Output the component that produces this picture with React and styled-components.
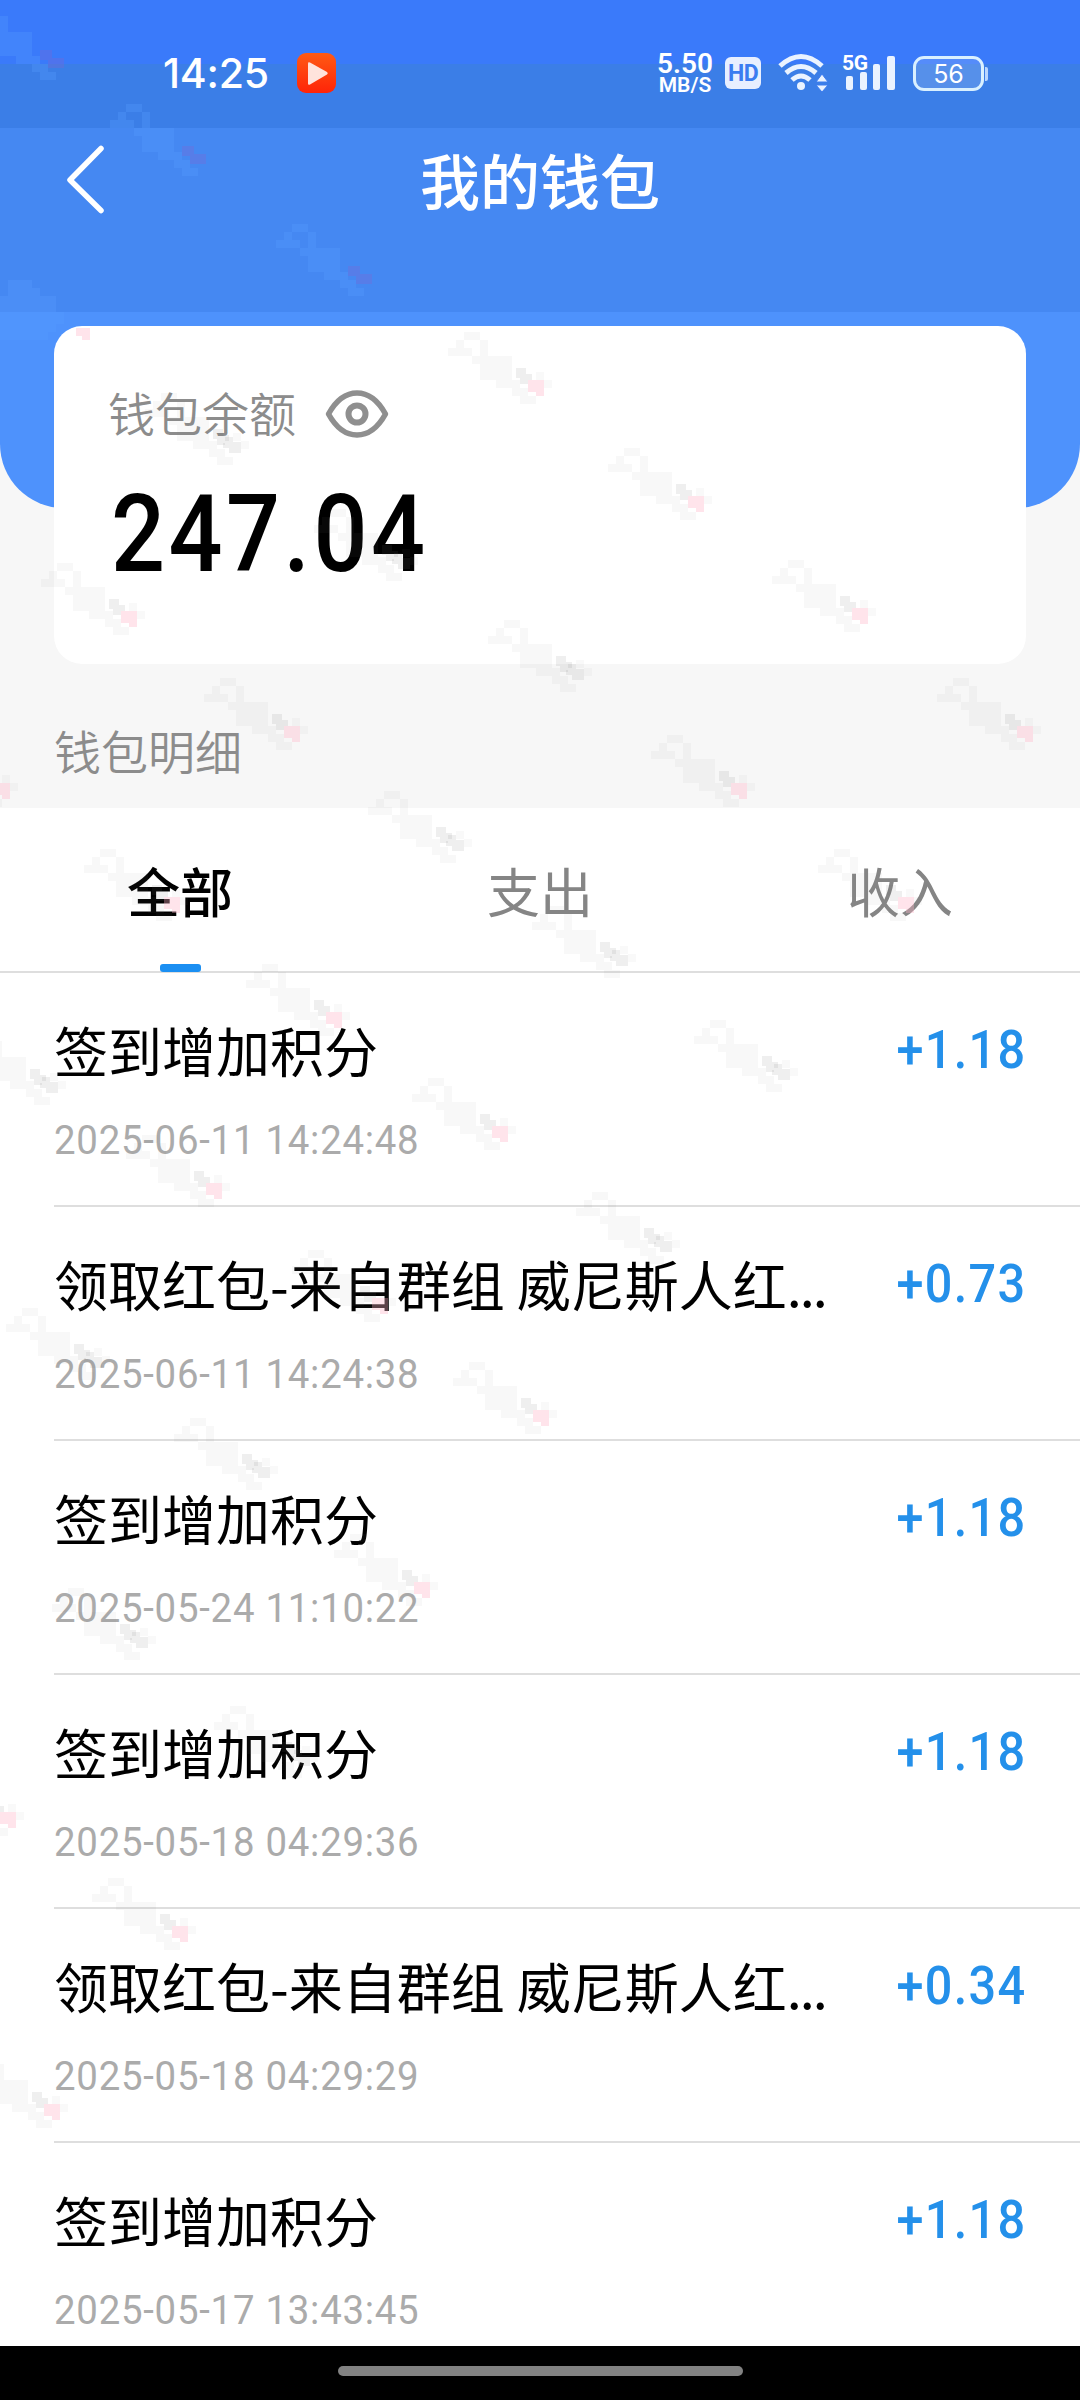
import React from 'react';
import styled, { createGlobalStyle } from 'styled-components';

const GlobalStyle = createGlobalStyle`
  * {
    box-sizing: border-box;
  }

  body {
    margin: 0;
    background: #fff;
    font-family: 'Noto Sans CJK SC', sans-serif;
  }
`;

const Screen = styled.div`
  position: relative;
  display: flex;
  flex-direction: column;
  width: 1080px;
  height: 2400px;
  overflow: hidden;
  background: #f7f7f7;
`;

const Hero = styled.header`
  flex: none;
  height: 508px;
  color: #fff;
  border-radius: 0 0 64px 64px;
  background: linear-gradient(
    #3a7afa 64px,
    #3b7ee7 64px,
    #3b7ee7 128px,
    #4588f2 128px,
    #4588f2 312px,
    #4e92fc 312px
  );
`;

const StatusBar = styled.div`
  display: flex;
  align-items: center;
  height: 128px;
  padding: 18px 91px 0 163px;
`;

const Clock = styled.span`
  width: 134px;
  font: 500 41px/50px Inter, sans-serif;
  letter-spacing: -0.2px;
`;

const StatusIcons = styled.div`
  display: flex;
  align-items: center;
  margin-left: auto;
`;

const Speed = styled.div`
  display: flex;
  flex-direction: column;
  align-items: center;
  width: 56px;
  margin-right: 12px;
  padding-top: 2px;
  font-family: Roboto, sans-serif;
`;

const SpeedValue = styled.span`
  font-size: 28px;
  font-weight: 600;
  line-height: 22px;
`;

const SpeedUnit = styled.span`
  font-size: 21px;
  font-weight: 600;
  line-height: 21px;
`;

const HdBadge = styled.span`
  width: 36px;
  height: 32px;
  border-radius: 6px;
  background: #e8efff;
  color: #3b7cf0;
  font: 700 23px/33px 'Roboto', sans-serif;
  text-align: center;
  letter-spacing: -0.5px;
`;

const Battery = styled.span`
  position: relative;
  width: 71px;
  height: 35px;
  border: 3px solid #d9f0ff;
  border-radius: 11px;
  background: rgba(255, 255, 255, 0.14);
  font: 400 25px/30px Inter, sans-serif;
  text-align: center;
  margin-right: 5px;

  &::after {
    content: '';
    position: absolute;
    right: -7px;
    top: 8px;
    width: 3px;
    height: 14px;
    border-radius: 0 2px 2px 0;
    background: #b9d6ff;
  }
`;

const NavBar = styled.div`
  display: grid;
  grid-template-columns: 140px 1fr 140px;
  align-items: center;
  height: 103px;
`;

const BackButton = styled.button`
  display: flex;
  padding: 0 0 0 64px;
  border: 0;
  background: none;
`;

const Title = styled.h1`
  margin: -2px 0 0;
  font-size: 60px;
  font-weight: 500;
  line-height: 80px;
  text-align: center;
`;

const Card = styled.section`
  flex: none;
  height: 338px;
  margin: -182px 54px 0;
  padding: 55px 54px 0;
  border-radius: 28px;
  background: #fff;
`;

const CardHead = styled.div`
  display: flex;
  align-items: center;
  height: 66px;
`;

const Label = styled.span`
  margin-top: -5px;
  color: #8c8c8c;
  font-size: 47px;
  font-weight: 350;
  line-height: 66px;
`;

const EyeButton = styled.button`
  display: flex;
  margin-left: 29px;
  padding: 0;
  border: 0;
  background: none;
`;

const Balance = styled.div`
  width: max-content;
  margin: 24px 0 0 3px;
  color: #000;
  font: 500 108px/126px Roboto, sans-serif;
  letter-spacing: 4px;
  transform: scaleX(0.88);
  transform-origin: left;
`;

const SectionTitle = styled.h2`
  flex: none;
  height: 144px;
  margin: 0;
  padding: 0 54px;
  color: #8c8c8c;
  font-size: 47px;
  font-weight: 350;
  line-height: 171px;
`;

const Tabs = styled.nav`
  flex: none;
  display: grid;
  grid-template-columns: repeat(3, 1fr);
  height: 165px;
  border-bottom: 2px solid #dedede;
  background: #fff;
`;

const Tab = styled.button`
  display: flex;
  flex-direction: column;
  align-items: center;
  justify-content: space-between;
  padding: 0;
  border: 0;
  background: none;
  color: ${({ $active }) => ($active ? '#000' : '#858585')};
  font-family: inherit;
  font-size: 53px;
  font-weight: ${({ $active }) => ($active ? 500 : 400)};
  line-height: 164px;
  height: 163px;

  &::after {
    content: '';
    flex: none;
    width: 41px;
    height: 8px;
    margin-top: -8px;
    border-radius: 3px;
    background: ${({ $active }) => ($active ? '#1b8ff2' : 'transparent')};
  }
`;

const List = styled.ul`
  flex: 1;
  margin: 0;
  padding: 0 0 0 54px;
  overflow: hidden;
  list-style: none;
  background: #fff;
`;

const Row = styled.li`
  display: flex;
  justify-content: space-between;
  height: 234px;
  padding: 38px 54px 0 0;
  border-bottom: 2px solid #dedede;
`;

const RowTitle = styled.div`
  color: #000;
  font-size: 54px;
  line-height: 78px;
  white-space: nowrap;
`;

const Dots = styled.span`
  letter-spacing: -2px;
`;

const RowDate = styled.div`
  width: max-content;
  margin-top: 23px;
  color: #ababab;
  font: 400 41.5px/56px Roboto, sans-serif;
  letter-spacing: 0.8px;
  transform: scaleX(0.925);
  transform-origin: left;
`;

const Amount = styled.div`
  margin-right: -1px;
  color: #2490ea;
  font: 500 54px/77px Roboto, sans-serif;
  letter-spacing: 1.5px;
  transform: scaleX(0.9);
  transform-origin: right;
`;

const HomeBar = styled.footer`
  flex: none;
  display: flex;
  justify-content: center;
  height: 54px;
  padding-top: 20px;
  background: #000;
`;

const HomePill = styled.div`
  width: 405px;
  height: 10px;
  border-radius: 5px;
  background: #828282;
`;

const MarkLayer = styled.svg`
  position: absolute;
  inset: 0;
  pointer-events: none;
`;

const records = [
  { title: '签到增加积分', date: '2025-06-11 14:24:48', amount: '+1.18' },
  { title: '领取红包-来自群组 威尼斯人红', cut: true, date: '2025-06-11 14:24:38', amount: '+0.73' },
  { title: '签到增加积分', date: '2025-05-24 11:10:22', amount: '+1.18' },
  { title: '签到增加积分', date: '2025-05-18 04:29:36', amount: '+1.18' },
  { title: '领取红包-来自群组 威尼斯人红', cut: true, date: '2025-05-18 04:29:29', amount: '+0.34' },
  { title: '签到增加积分', date: '2025-05-17 13:43:45', amount: '+1.18' },
];

// x, y, tone of the heart
const marks = [
  [145, 393, 'gray'],
  [448, 332, 'pink'],
  [608, 448, 'pink'],
  [772, 560, 'pink'],
  [41, 563, 'pink'],
  [314, 509, 'gray'],
  [488, 620, 'gray'],
  [204, 678, 'pink'],
  [937, 678, 'pink'],
  [651, 735, 'pink'],
  [-86, 735, 'pink'],
  [368, 791, 'gray'],
  [84, 849, 'pink'],
  [818, 849, 'pink'],
  [532, 906, 'gray'],
  [246, 964, 'pink'],
  [694, 1020, 'gray'],
  [-38, 1033, 'gray'],
  [412, 1078, 'pink'],
  [126, 1135, 'pink'],
  [576, 1192, 'gray'],
  [292, 1250, 'pink'],
  [6, 1308, 'gray'],
  [453, 1362, 'pink'],
  [174, 1418, 'gray'],
  [334, 1534, 'pink'],
  [52, 1588, 'gray'],
  [214, 1706, 'gray'],
  [-80, 1764, 'pink'],
  [92, 1878, 'pink'],
  [-36, 2056, 'pink'],
];

const heroMarks = [
  [-32, 8],
  [110, 104],
  [276, 224],
];

// rows of 8px cells: [row, first column, cell count]
const cells = [
  [0, 2, 2],
  [1, 1, 1],
  [1, 4, 1],
  [2, 0, 3],
  [2, 4, 1],
  [3, 3, 5],
  [4, 4, 4],
  [5, 4, 4],
  [6, 6, 3],
  [7, 8, 2],
  [8, 9, 2],
];

const Cells = ({ fill }) =>
  cells.map(([row, col, count]) => (
    <rect key={`${row}-${col}`} x={col * 8} y={row * 8} width={count * 8} height="8" fill={fill} />
  ));

const Mark = ({ x, y, tone }) => (
  <g transform={`translate(${x} ${y})`} shapeRendering="crispEdges">
    <Cells fill="rgba(128,128,128,.06)" />
    <path d="M68 36h10v6h6v6h-4v4h-8v-6h-4z" fill="rgba(110,110,110,.11)" />
    {tone === 'pink' ? (
      <path d="M80 48h16v16h-8v-4h-8z" fill="rgba(255,180,200,.36)" />
    ) : (
      <path d="M80 44h8v5h8v11h-12v-5h-6v-5h2z" fill="rgba(120,120,120,.12)" />
    )}
    <path d="M88 40h8v8h8v8h-8v-8h-8z" fill="rgba(128,128,128,.05)" />
  </g>
);

const Watermarks = () => (
  <MarkLayer width="1080" height="2346" viewBox="0 0 1080 2346">
    {marks.map(([x, y, tone]) => (
      <Mark key={`${x}-${y}`} x={x} y={y} tone={tone} />
    ))}
    {heroMarks.map(([x, y]) => (
      <g key={`${x}-${y}`} transform={`translate(${x} ${y})`} shapeRendering="crispEdges">
        <Cells fill="rgba(86,156,255,.3)" />
        <path d="M72 42h12v8h12v10h-16v-8h-8z" fill="rgba(130,100,210,.3)" />
      </g>
    ))}
    <g shapeRendering="crispEdges">
      <path d="M8 280h24v8h8v8h16v16h8v12h-8v8h-8v8H0v-44h8z" fill="rgba(86,156,255,.35)" />
      <path d="M76 328h14v12h-8v-4h-6z" fill="rgba(255,180,200,.36)" />
    </g>
  </MarkLayer>
);

const PlayIcon = () => (
  <svg width="39" height="40" viewBox="0 0 39 40">
    <defs>
      <linearGradient id="play" x1="0" y1="0" x2="0" y2="1">
        <stop offset="0" stopColor="#ff5a14" />
        <stop offset="1" stopColor="#ff2408" />
      </linearGradient>
    </defs>
    <rect width="39" height="40" rx="9" fill="url(#play)" />
    <path d="M11 10.500v20q0 2 2 1l17-10q1.600-1.200 0-2.400l-17-9.600q-2-1-2 1z" fill="#ffe3dc" />
  </svg>
);

const WifiIcon = () => (
  <svg width="52" height="40" viewBox="0 0 52 40" style={{ marginLeft: 17 }}>
    <g fill="none" stroke="#eaf3ff" strokeWidth="5">
      <path d="M2 13Q23-6 44 13" />
      <path d="M8 20Q23 7 38 20" />
      <path d="M14 27Q23 19 32 27" />
    </g>
    <circle cx="23" cy="33" r="4" fill="#eaf3ff" />
    <path d="M38 29l6-8 6 8zM38 32l6 7 6-7z" fill="#eaf3ff" stroke="#3b7cf0" strokeWidth="1" />
  </svg>
);

const SignalIcon = () => (
  <svg width="54" height="50" viewBox="0 -5 54 50" style={{ margin: '0 17px 0 12px' }}>
    <text x="0" y="17" fill="#fff" fontFamily="Roboto, sans-serif" fontSize="21" fontWeight="700" textLength="26">
      5G
    </text>
    <g fill="#eaf3ff">
      <rect x="4" y="23" width="7" height="14" rx="2" />
      <rect x="18" y="19" width="7" height="18" rx="2" />
      <rect x="31" y="11" width="7" height="26" rx="2" />
      <rect x="45" y="3" width="8" height="34" rx="2" />
    </g>
  </svg>
);

const BackIcon = () => (
  <svg width="42" height="72" viewBox="0 0 42 72" fill="none" stroke="#fff" strokeWidth="5.500" strokeLinecap="round" strokeLinejoin="round">
    <path d="M37 4.500L6 36l31 30.500" />
  </svg>
);

const EyeIcon = () => (
  <svg width="64" height="50" viewBox="0 0 64 50" fill="none" stroke="#8f8f8f">
    <path d="M3.500 25C19-3 45-3 60.500 25C45 53 19 53 3.500 25z" strokeWidth="5.500" strokeLinejoin="round" />
    <circle cx="32" cy="25" r="8.500" strokeWidth="6" />
  </svg>
);

export default function App() {
  return (
    <>
      <GlobalStyle />
      <Screen>
        <Hero>
          <StatusBar>
            <Clock>14:25</Clock>
            <PlayIcon />
            <StatusIcons>
              <Speed>
                <SpeedValue>5.50</SpeedValue>
                <SpeedUnit>MB/S</SpeedUnit>
              </Speed>
              <HdBadge>HD</HdBadge>
              <WifiIcon />
              <SignalIcon />
              <Battery>56</Battery>
            </StatusIcons>
          </StatusBar>
          <NavBar>
            <BackButton>
              <BackIcon />
            </BackButton>
            <Title>我的钱包</Title>
          </NavBar>
        </Hero>
        <Card>
          <CardHead>
            <Label>钱包余额</Label>
            <EyeButton>
              <EyeIcon />
            </EyeButton>
          </CardHead>
          <Balance>247.04</Balance>
        </Card>
        <SectionTitle>钱包明细</SectionTitle>
        <Tabs>
          <Tab $active>全部</Tab>
          <Tab>支出</Tab>
          <Tab>收入</Tab>
        </Tabs>
        <List>
          {records.map(({ title, cut, date, amount }) => (
            <Row key={date}>
              <div>
                <RowTitle>
                  {title}
                  {cut && <Dots>...</Dots>}
                </RowTitle>
                <RowDate>{date}</RowDate>
              </div>
              <Amount>{amount}</Amount>
            </Row>
          ))}
        </List>
        <HomeBar>
          <HomePill />
        </HomeBar>
        <Watermarks />
      </Screen>
    </>
  );
}
